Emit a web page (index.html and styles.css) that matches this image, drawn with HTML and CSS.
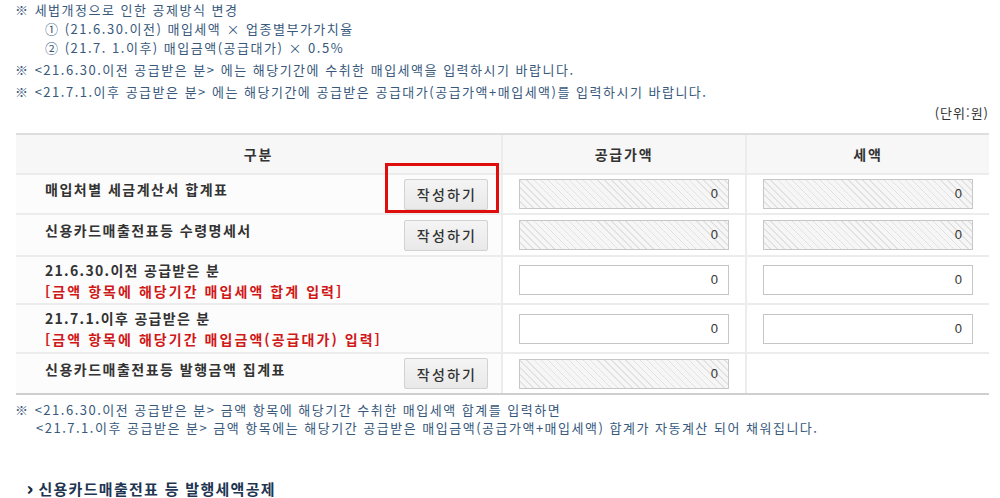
FILE: index.html
```html
<!DOCTYPE html>
<html lang="ko">
<head>
<meta charset="utf-8">
<link rel="stylesheet" href="styles.css">
</head>
<body>
<div class="page">
  <div class="notes">
    <p class="note">※ 세법개정으로 인한 공제방식 변경</p>
    <p class="sub">① (21.6.30.이전) 매입세액 × 업종별부가가치율</p>
    <p class="sub">② (21.7. 1.이후) 매입금액(공급대가) × 0.5%</p>
    <p class="note gap">※ &lt;21.6.30.이전 공급받은 분&gt; 에는 해당기간에 수취한 매입세액을 입력하시기 바랍니다.</p>
    <p class="note gap">※ &lt;21.7.1.이후 공급받은 분&gt; 에는 해당기간에 공급받은 공급대가(공급가액+매입세액)를 입력하시기 바랍니다.</p>
  </div>
  <div class="unit">(단위:원)</div>
  <table class="grid">
    <colgroup>
      <col class="c1"><col class="c2"><col class="c3">
    </colgroup>
    <thead>
      <tr><th>구분</th><th>공급가액</th><th>세액</th></tr>
    </thead>
    <tbody>
      <tr class="r1">
        <td class="lab"><div class="labwrap"><span class="name">매입처별 세금계산서 합계표</span><span class="btnwrap"><button class="btn">작성하기</button><span class="mark"></span></span></div></td>
        <td><div class="inp ro">0</div></td>
        <td><div class="inp ro">0</div></td>
      </tr>
      <tr class="r2">
        <td class="lab"><div class="labwrap"><span class="name">신용카드매출전표등 수령명세서</span><button class="btn">작성하기</button></div></td>
        <td><div class="inp ro">0</div></td>
        <td><div class="inp ro">0</div></td>
      </tr>
      <tr class="r3">
        <td class="lab"><div class="name2">21.6.30.이전 공급받은 분<br><span class="red">[금액 항목에 해당기간 매입세액 합계 입력]</span></div></td>
        <td><div class="inp">0</div></td>
        <td><div class="inp">0</div></td>
      </tr>
      <tr class="r4">
        <td class="lab"><div class="name2">21.7.1.이후 공급받은 분<br><span class="red">[금액 항목에 해당기간 매입금액(공급대가) 입력]</span></div></td>
        <td><div class="inp">0</div></td>
        <td><div class="inp">0</div></td>
      </tr>
      <tr class="r5">
        <td class="lab"><div class="labwrap"><span class="name">신용카드매출전표등 발행금액 집계표</span><button class="btn">작성하기</button></div></td>
        <td><div class="inp ro">0</div></td>
        <td></td>
      </tr>
    </tbody>
  </table>
  <div class="foot">
    <p class="note">※ &lt;21.6.30.이전 공급받은 분&gt; 금액 항목에 해당기간 수취한 매입세액 합계를 입력하면</p>
    <p class="sub2">&lt;21.7.1.이후 공급받은 분&gt; 금액 항목에는 해당기간 공급받은 매입금액(공급가액+매입세액) 합계가 자동계산 되어 채워집니다.</p>
  </div>
  <h3 class="sect"><span class="arrow">›</span>신용카드매출전표 등 발행세액공제</h3>
</div>
</body>
</html>
```
FILE: styles.css
```css
* { box-sizing: border-box; }
html, body { margin: 0; padding: 0; background: #fff; }
body {
  font-family: "Noto Sans CJK KR", "Noto Sans", sans-serif;
  font-size: 13px;
  color: #333;
  width: 1000px;
  height: 498px;
  overflow: hidden;
}
.page { padding: 0 11px 0 15px; }
.note, .sub, .sub2 {
  margin: 0;
  color: #38597c;
  line-height: 19px;
  white-space: nowrap;
  letter-spacing: 1.5px;
}
.sub { padding-left: 30px; }
.note.gap { margin-top: 3px; }
.unit {
  text-align: right;
  line-height: 20px;
  margin-top: 2px;
  color: #333;
  letter-spacing: 1px;
}
.grid {
  margin-top: 10px;
  margin-left: 1px;
  width: 973px;
  border-collapse: collapse;
  table-layout: fixed;
}
.c1 { width: 486px; }
.c2 { width: 244px; }
.c3 { width: 243px; }
.grid th {
  background: #f7f7f7;
  height: 40px;
  font-weight: 700;
  font-size: 14px;
  letter-spacing: 1.8px;
  color: #333;
  border-top: 2px solid #dedede;
  border-bottom: 2px solid #ececec;
  border-left: 2px solid #ececec;
}
.grid th:first-child { border-left: none; }
.grid td {
  border-bottom: 2px solid #ececec;
  border-left: 2px solid #ececec;
  padding: 0 16px;
  vertical-align: middle;
}
.grid td:first-child { border-left: none; }
.grid td.lab { background: #fcfcfc; padding: 0 13px 0 29px; }
.grid tbody tr:last-child td { border-bottom: 2px solid #cfcfcf; }
.r1 td { height: 40px; }
.r2 td { height: 42px; }
.r3 td { height: 48px; }
.r4 td { height: 49px; }
.r5 td { height: 41px; }
.labwrap {
  display: flex;
  align-items: center;
  justify-content: space-between;
}
.name {
  font-size: 14px;
  font-weight: 700;
  color: #333;
  letter-spacing: 1.5px;
  margin-bottom: 10px;
}
.name2 {
  font-size: 14px;
  font-weight: 700;
  color: #333;
  line-height: 21px;
  letter-spacing: 1.3px;
  margin-top: 1px;
}
.red { color: #d01818; font-weight: 700; letter-spacing: 2.05px; }
.btnwrap { position: relative; display: inline-flex; }
.btn {
  font-family: inherit;
  width: 84px;
  height: 31px;
  font-size: 14px;
  color: #333;
  background: linear-gradient(#f4f4f4, #e9e9e9);
  border: 1px solid #d2d2d2;
  border-radius: 2px;
  padding: 0 0 0 2px;
  letter-spacing: 2.2px;
  font-weight: 500;
}
.mark {
  position: absolute;
  left: -19px;
  top: -16px;
  width: 114px;
  height: 50px;
  border: 3px solid #e00d0d;
}
.inp {
  height: 30px;
  border: 1px solid #c6c6c6;
  background: #fff;
  text-align: right;
  padding-right: 10px;
  line-height: 28px;
  font-size: 13px;
  color: #333;
  font-family: "Liberation Sans", sans-serif;
}
.inp.ro {
  background-color: #f4f4f4;
  background-image: repeating-linear-gradient(45deg, #f6f6f6 0, #f6f6f6 4px, #e2e2e2 4px, #e2e2e2 5px);
}
.foot { margin-top: 6px; }
.foot .note, .foot .sub2 { line-height: 18px; }
.sub2 { padding-left: 21px; }
.sect {
  margin: 40px 0 0 12px;
  font-size: 15px;
  font-weight: 700;
  color: #1e3552;
  letter-spacing: 1.3px;
  line-height: 20px;
  white-space: nowrap;
}
.arrow {
  display: inline-block;
  font-weight: 900;
  margin-right: 4px;
  font-size: 18px;
  line-height: 20px;
  color: #14263f;
  transform: scaleX(1.2);
}
```
